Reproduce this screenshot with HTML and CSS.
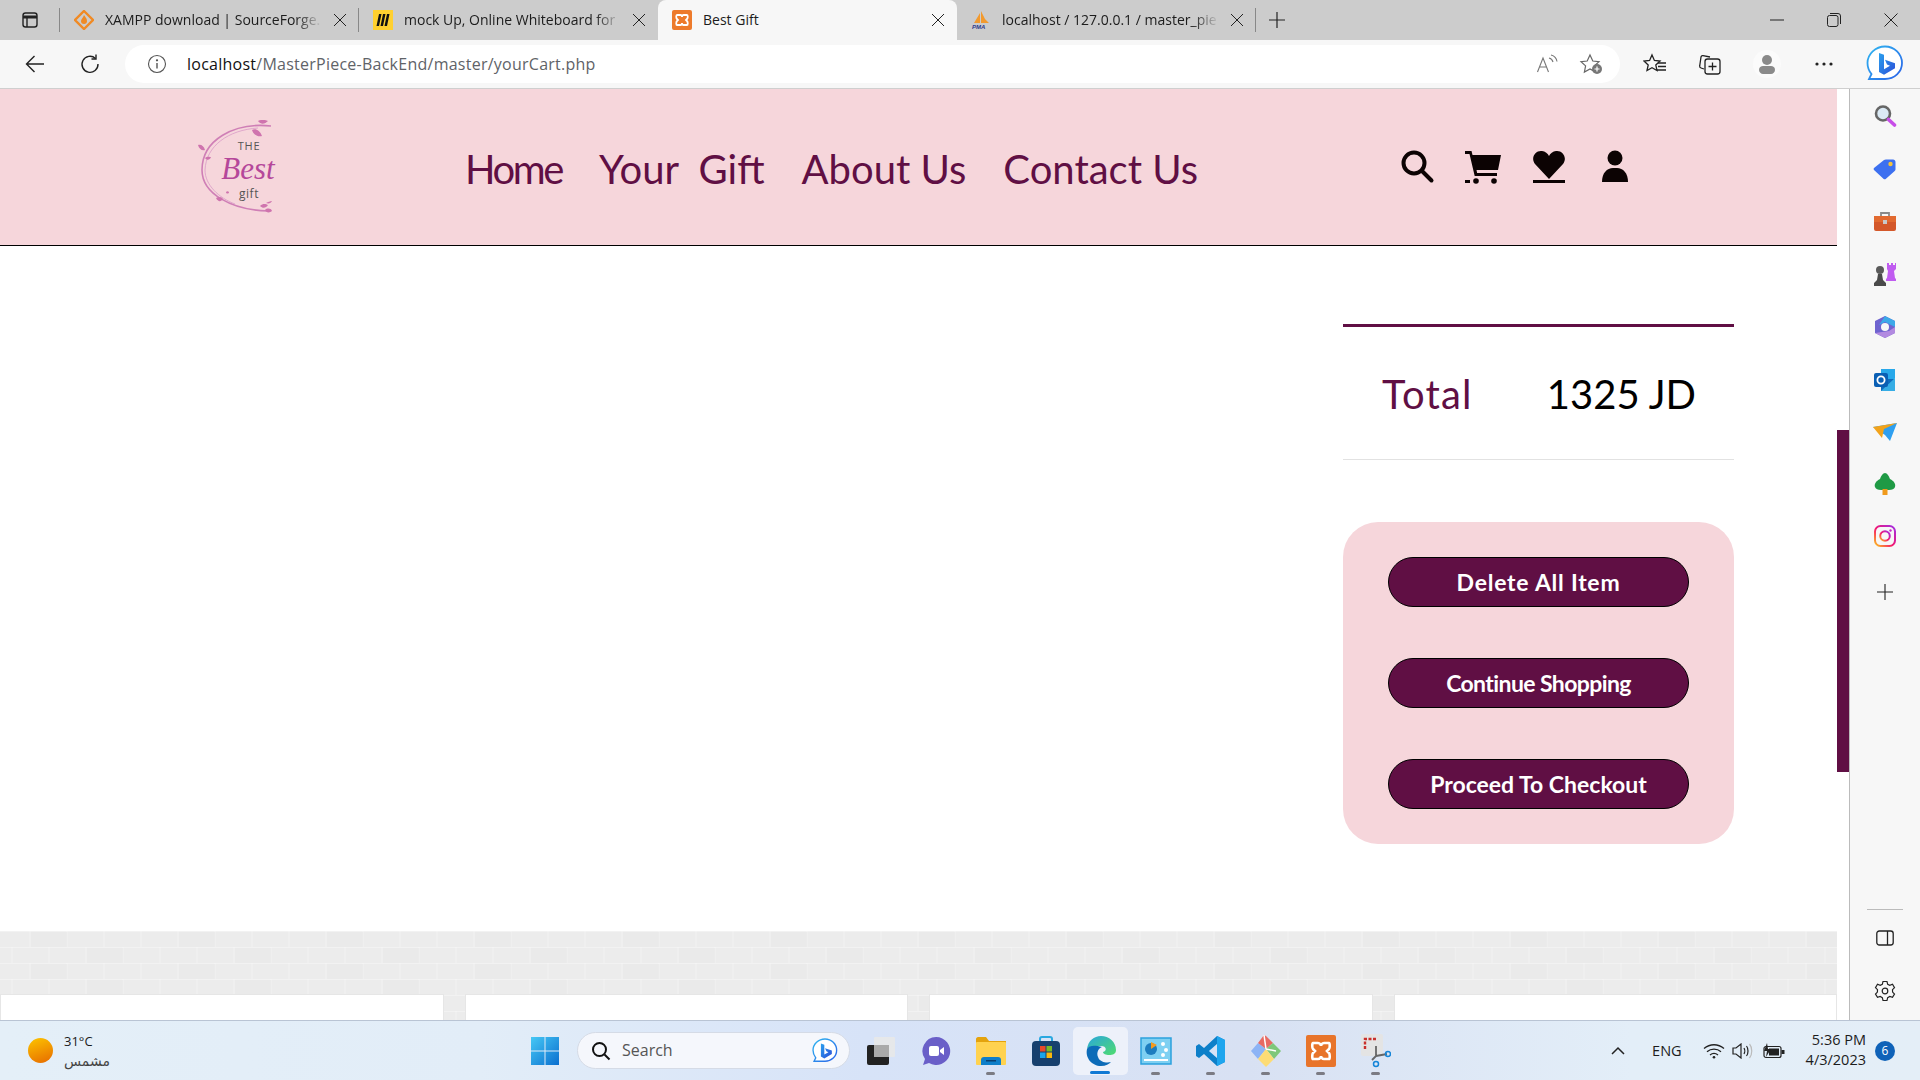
FILE: index.html
```html
<!DOCTYPE html>
<html>
  <head>
    <meta name="viewport" content="width=device-width,initial-scale=1.0">
    <title>Best Gift</title>
    <link rel="stylesheet" href="styles.css">
  </head>
  <body>
    <div class="tabbar">
      <div class="tab-manage">
        <svg width="18" height="18" viewBox="0 0 18 18" fill="none" stroke="#222" stroke-width="1.4"><rect x="2" y="2" width="14" height="14" rx="2.5"/><path d="M2 6h14" stroke-width="3"/><path d="M6 6v10"/></svg>
      </div>
      <div class="tab">
        <svg class="favicon" viewBox="0 0 20 20"><path d="M10 1l9 9-9 9-9-9z" fill="none" stroke="#f08a24" stroke-width="2.4"/><path d="M10 5c1 2 3 3 3 6a3 3 0 0 1-6 0c0-2 2-3 3-6z" fill="#f08a24"/></svg>
        <span class="tab-title">XAMPP download | SourceForge.</span>
        <span class="tab-close"></span>
      </div>
      <div class="tab">
        <svg class="favicon" viewBox="0 0 20 20"><rect width="20" height="20" fill="#ffd02f"/><path d="M6 4h2.500L6 16H3.500zM10 4h2.500L10 16H7.500zM14 4h2.500L14 16h-2.500z" fill="#111"/></svg>
        <span class="tab-title">mock Up, Online Whiteboard for</span>
        <span class="tab-close"></span>
      </div>
      <div class="tab tab-active">
        <svg class="favicon" viewBox="0 0 20 20"><rect width="20" height="20" rx="2" fill="#ed7a2b"/><path d="M5 5h3.500c1 0 1.500 1 1.500 2 0-1 .5-2 1.500-2H15c1 0 1 3 0 4l-1 1 1 1c1 1 1 4 0 4h-3.500c-1 0-1.500-1-1.500-2 0 1-.5 2-1.500 2H5c-1 0-1-3 0-4l1-1-1-1c-1-1-1-4 0-4z" fill="none" stroke="#fff" stroke-width="1.800"/></svg>
        <span class="tab-title">Best Gift</span>
        <span class="tab-close"></span>
      </div>
      <div class="tab">
        <svg class="favicon" viewBox="0 0 20 20"><path d="M3 13L9 3v10zM10 1l6 12h-6zM12 7l6 6h-3z" fill="#f29a2e"/><text x="1" y="19" class="pma-text">PMA</text></svg>
        <span class="tab-title">localhost / 127.0.0.1 / master_pie</span>
        <span class="tab-close"></span>
      </div>
      <div class="new-tab">
        <svg width="18" height="18" viewBox="0 0 18 18" stroke="#222" stroke-width="1.200"><path d="M9 1v16M1 9h16"/></svg>
      </div>
      <div class="window-btns">
        <svg width="14" height="14" viewBox="0 0 14 14" stroke="#222" fill="none"><path d="M0 7h14"/></svg>
        <svg width="14" height="14" viewBox="0 0 14 14" stroke="#222" fill="none"><rect x=".5" y="2.500" width="10.500" height="11" rx="2"/><path d="M3 .5h8a2.500 2.500 0 0 1 2.500 2.500v8"/></svg>
        <svg width="14" height="14" viewBox="0 0 14 14" stroke="#222" fill="none"><path d="M.5.5l13 13M13.500.5l-13 13"/></svg>
      </div>
    </div>

    <div class="toolbar">
      <svg class="nav-back" width="20" height="20" viewBox="0 0 20 20" fill="none" stroke="#222" stroke-width="1.400"><path d="M19 10H1.500M9.500 2l-8 8 8 8"/></svg>
      <svg class="nav-reload" width="20" height="20" viewBox="0 0 20 20" fill="none" stroke="#222" stroke-width="1.400"><path d="M15.500 4.500A8 8 0 1 0 18 10"/><path d="M16 .5v4.500h-4.500"/></svg>
      <div class="address">
        <svg width="20" height="20" viewBox="0 0 20 20" fill="none" stroke="#555" stroke-width="1.100"><circle cx="10" cy="10" r="8.500"/><path d="M10 9v5.500" stroke-width="1.400"/><circle cx="10" cy="6.300" r=".6" fill="#555"/></svg>
        <span class="url"><span class="url-host">localhost</span>/MasterPiece-BackEnd/master/yourCart.php</span>
        <svg class="read-aloud" width="22" height="20" viewBox="0 0 22 20" fill="none" stroke="#777" stroke-width="1.100"><path d="M1.500 18L7 4l5.500 14M3.500 13h7"/><path d="M13 4c2 .5 3.500 2 4 4M15 1c3 .8 5.500 3 6 6.500"/></svg>
        <svg class="star-add" width="24" height="22" viewBox="0 0 24 22" fill="none" stroke="#666" stroke-width="1.200"><path d="M11 2l2.800 6 6.200.7-4.600 4.200 1.200 6.100L11 16l-5.600 3 1.200-6.100L2 8.700 8.200 8z"/><circle cx="18" cy="16" r="5" fill="#777" stroke="none"/><path d="M18 13.500v5M15.500 16h5" stroke="#fff"/></svg>
      </div>
      <div class="toolbar-icons">
        <svg width="24" height="22" viewBox="0 0 24 22" fill="none" stroke="#222" stroke-width="1.300"><path d="M9 2l2.400 5.500 5.600.6-4.200 3.800 1.200 5.600L9 14.700l-5 2.800 1.200-5.600L1 8.100l5.600-.6z"/><path d="M15 10h8M15 13.500h8M14 17h9"/></svg>
        <svg width="24" height="22" viewBox="0 0 24 22" fill="none" stroke="#222" stroke-width="1.300"><path d="M6 16l-3-1c-1-.3-1.500-1-1.300-2L3 4c.2-1 1-1.600 2-1.400l7 1.400"/><rect x="7" y="6" width="15" height="15" rx="2.500"/><path d="M14.500 9.500v8M10.500 13.500h8"/></svg>
        <div class="profile-btn">
          <svg width="22" height="22" viewBox="0 0 22 22" fill="#8a8a8a"><circle cx="11" cy="7" r="5"/><path d="M3 17c0-3 2-4 4-4h8c2 0 4 1 4 4 0 2-2 4-4 4H7c-2 0-4-2-4-4z"/></svg>
        </div>
        <svg class="more-dots" width="20" height="6" viewBox="0 0 20 6" fill="#222"><circle cx="3" cy="3" r="1.600"/><circle cx="10" cy="3" r="1.600"/><circle cx="17" cy="3" r="1.600"/></svg>
      </div>
      <svg class="bing-btn" width="38" height="38" viewBox="0 0 38 38">
        <defs>
          <linearGradient id="bing-ring" x1="0" y1="0" x2="1" y2="1"><stop offset="0" stop-color="#2fb6f0"/><stop offset="1" stop-color="#2a62e8"/></linearGradient>
          <linearGradient id="bing-b" x1="0" y1="0" x2="1" y2="1"><stop offset="0" stop-color="#2aa0ee"/><stop offset="1" stop-color="#2c4fd8"/></linearGradient>
        </defs>
        <path d="M19 1.500c9.500 0 17 7.500 17 16.500s-7.500 16-17 16H3l2.500-5C3 26 1.500 22 1.500 18 1.500 9 9.500 1.500 19 1.500z" fill="#fff" stroke="url(#bing-ring)" stroke-width="1.800"/>
        <path d="M13 8l5 1.700v14.500l6-3.400-3-1.400-2-4.600 10 3.500v5l-11 6.500-5-2.800z" fill="url(#bing-b)"/>
      </svg>
    </div>

    <div class="workspace">
      <div class="page">
        <header class="site-header">
          <svg class="logo" width="80" height="94" viewBox="0 0 80 94">
            <path d="M73 6C36 2 4 20 4 50c0 24 30 40 66 41" fill="none" stroke="#cf7fb6" stroke-width="1.600"/>
            <path d="M60 8C30 10 8 26 7 50c0 15 14 28 30 34" fill="none" stroke="#d99ac6" stroke-width=".8"/>
            <path d="M60 1c4-2 8-1 10 0-3 3-7 4-10 0zM54 10c3-2 8 0 10 6-5 1-9-2-10-6zM0 25c3-1 6 1 7 5-3 1-6-1-7-5zM7 38c2-2 5-1 6-1-1 3-4 4-6 1zM18 78c3-2 6-1 7 1-2 3-5 3-7-1zM28 72c1-1 2-1 3 0 0 2-3 2-3 0zM62 86c3-3 6-2 8-1-2 3-5 4-8 1zM67 90c2-2 6-2 7 1-2 2-6 2-7-1zM68 83c2-1 4-2 6-2-1 2-3 3-6 2z" fill="#cf74ae"/>
            <text x="51" y="30" class="logo-the">THE</text>
            <text x="50" y="59" class="logo-best">Best</text>
            <text x="51" y="78" class="logo-gift">gift</text>
          </svg>
          <nav class="site-nav">
            <a class="nav-tight">Home</a>
            <a class="nav-wide">Your Gift</a>
            <a>About Us</a>
            <a>Contact Us</a>
          </nav>
          <div class="site-icons">
            <svg width="36" height="36" viewBox="0 0 36 36" fill="none" stroke="#0c0303" stroke-width="4"><circle cx="15" cy="14" r="10.500"/><path d="M22.500 21.500l10 10" stroke-linecap="round"/></svg>
            <svg width="36" height="36" viewBox="0 0 36 36" fill="#0c0303"><path d="M0 2h6.500l1 4H36l-3 15H11.500l.6 3H32v3H9.700L4.500 5H0z"/><circle cx="11" cy="32" r="2.800"/><circle cx="29" cy="32" r="2.800"/><rect x="0" y="31" width="5" height="3"/></svg>
            <svg width="36" height="36" viewBox="0 0 36 36" fill="#0c0303"><path d="M18 30L4 15C-1 8 5 1 11 2c3 .4 6 2.500 7 5 1-2.500 4-4.600 7-5 6-1 12 6 7 13z"/><rect x="2" y="31" width="32" height="3"/></svg>
            <svg width="36" height="36" viewBox="0 0 36 36" fill="#0c0303"><circle cx="18" cy="9" r="7.500"/><path d="M5 33c0-9 5-14 11-14h4c6 0 11 5 11 14z"/></svg>
          </div>
        </header>

        <main class="cart">
          <div class="summary">
            <div class="total-row">
              <span class="total-label">Total</span>
              <span class="total-value">1325 JD</span>
            </div>
            <div class="actions">
              <a class="action-btn btn-wide">Delete All Item</a>
              <a class="action-btn btn-tight">Continue Shopping</a>
              <a class="action-btn">Proceed To Checkout</a>
            </div>
          </div>
        </main>

        <section class="bricks">
          <div class="brick-card"></div>
          <div class="brick-card"></div>
          <div class="brick-card"></div>
          <div class="brick-card"></div>
        </section>
      </div>

      <div class="scrollbar"><div class="scroll-thumb"></div></div>

      <aside class="edge-bar">
        <div class="edge-group">
          <svg width="24" height="24" viewBox="0 0 24 24" fill="none"><circle cx="10" cy="9.500" r="7" stroke="#666" stroke-width="2.600" fill="#dbeaf5"/><path d="M15.500 15.500l6 5.500" stroke="#c74ee8" stroke-width="3.600" stroke-linecap="round"/></svg>
          <svg width="24" height="24" viewBox="0 0 24 24"><path d="M1 13c-.5-.7-.5-1.500 0-2L11 3c.5-.4 1-.6 2-.6h7c1.500 0 2.500 1 2.500 2.500v7c0 1-.2 1.500-.8 2l-9 8c-.6.5-1.500.5-2 0z" fill="#3d70f0"/><circle cx="17.500" cy="7" r="2.200" fill="#f5c43a"/></svg>
          <svg width="24" height="24" viewBox="0 0 24 24"><path d="M8 7V3h8v4" fill="none" stroke="#8a8a8a" stroke-width="1.800"/><rect x="1" y="6" width="22" height="15" rx="2" fill="#d4582a"/><rect x="1" y="6" width="22" height="6" fill="#e26a30"/><rect x="10" y="10" width="4" height="4" fill="#c9c9c9"/></svg>
          <svg width="24" height="24" viewBox="0 0 24 24"><path d="M14 1h2v2h2V1h2v2h2V1h1v6l-2 2 1 7 1 1v2H13v-2l1-1 1-7-1-2z" fill="#c05cf0"/><circle cx="7" cy="8" r="4" fill="#5a5a5a"/><path d="M5 12h4l1 6 3 3v3H1v-3l3-3z" fill="#4a4a4a"/></svg>
          <svg width="24" height="24" viewBox="0 0 24 24"><path d="M12 1l10 5v12l-10 5-10-5V6z" fill="#6e63cf"/><path d="M12 1l10 5v6l-6-3-4-2-6 3z" fill="#3da9e8"/><path d="M2 18l10 5 10-5v-6l-6 4z" fill="#b28ae0"/><circle cx="12" cy="12" r="4" fill="#f7f7f7"/></svg>
          <svg width="24" height="24" viewBox="0 0 24 24"><rect x="8" y="1" width="14" height="12" fill="#28a8ea"/><path d="M8 11l14 0v12H8z" fill="#0f6cbd"/><path d="M22 10v13H8z" fill="#50d9ff" opacity=".6"/><rect x="1" y="5" width="14" height="14" rx="2" fill="#0a5fb4"/><circle cx="8" cy="12" r="3.600" fill="none" stroke="#fff" stroke-width="1.800"/></svg>
          <svg width="24" height="22" viewBox="0 0 24 22"><path d="M0 6l24-4-7 18-5-6z" fill="#2e9ff0"/><path d="M0 6l24-4-13 6-2 9z" fill="#f2a31b"/></svg>
          <svg width="24" height="24" viewBox="0 0 24 24"><path d="M12 1c2 0 4 3 5 6 4 2 6 5 5 8-.5 2-3 3-6 3H8c-3 0-5.500-1-6-3-1-3 1-6 5-8 1-3 3-6 5-6z" fill="#1f9a45"/><rect x="9.500" y="17" width="5" height="6" fill="#f09a1c"/></svg>
          <svg width="24" height="24" viewBox="0 0 24 24" fill="none">
            <defs><linearGradient id="insta" x1="0" y1="1" x2="1" y2="0"><stop offset="0" stop-color="#fdc21c"/><stop offset=".45" stop-color="#f5166e"/><stop offset="1" stop-color="#a02ee8"/></linearGradient></defs>
            <rect x="2" y="2" width="20" height="20" rx="5.500" stroke="url(#insta)" stroke-width="2"/><circle cx="12" cy="12" r="4.800" stroke="url(#insta)" stroke-width="2"/><circle cx="17.500" cy="6.500" r="1.200" fill="#c72cc5"/>
          </svg>
          <svg class="edge-plus" width="16" height="16" viewBox="0 0 16 16" stroke="#222" stroke-width="1.100"><path d="M8 0v16M0 8h16"/></svg>
        </div>
        <div class="edge-group edge-bottom">
          <div class="edge-divider"></div>
          <svg width="18" height="16" viewBox="0 0 18 16" fill="none" stroke="#222" stroke-width="1.300"><rect x=".8" y="1" width="16.400" height="14" rx="2.500"/><path d="M11.500 1v14"/></svg>
          <svg width="22" height="22" viewBox="0 0 22 22" fill="none" stroke="#222" stroke-width="1.200"><path d="M9 1.500h4l.7 2.800 2.100 1 2.700-1 2 3.400-2 2 .1 2.400 1.900 1.900-2 3.400-2.700-.9-2.100 1.200-.7 2.800H9l-.7-2.800-2.100-1.200-2.700.9-2-3.400 1.900-1.900.1-2.400-2-2 2-3.400 2.700 1 2.100-1z"/><circle cx="11" cy="11" r="2.800"/></svg>
        </div>
      </aside>
    </div>

    <footer class="taskbar">
      <div class="weather">
        <div class="sun"></div>
        <div class="weather-text">
          <span>31°C</span>
          <span class="weather-sub">مشمس</span>
        </div>
      </div>
      <svg class="start" width="30" height="30" viewBox="0 0 30 30">
        <defs><linearGradient id="win" x1="0" y1="0" x2="1" y2="1"><stop offset="0" stop-color="#46c8f5"/><stop offset="1" stop-color="#0b6fcf"/></linearGradient></defs>
        <path d="M1 1h13.500v13.500H1zM15.500 1H29v13.500H15.500zM1 15.500h13.500V29H1zM15.500 15.500H29V29H15.500z" fill="url(#win)"/>
      </svg>
      <div class="search-box">
        <svg width="20" height="20" viewBox="0 0 20 20" fill="none" stroke="#111" stroke-width="2"><circle cx="8.500" cy="8.500" r="6.500"/><path d="M13.500 13.500l5 5"/></svg>
        <span class="search-label">Search</span>
        <svg class="search-bing" width="26" height="26" viewBox="0 0 38 38">
          <path d="M19 1.500c9.500 0 17 7.500 17 16.500s-7.500 16-17 16H3l2.500-5C3 26 1.500 22 1.500 18 1.500 9 9.500 1.500 19 1.500z" fill="#fff" stroke="url(#bing-ring)" stroke-width="2"/>
          <path d="M13 8l5 1.700v14.500l6-3.400-3-1.400-2-4.600 10 3.500v5l-11 6.500-5-2.800z" fill="url(#bing-b)"/>
        </svg>
      </div>
      <div class="task-apps">
        <div class="task-app">
          <svg width="30" height="30" viewBox="0 0 30 30"><rect x="1" y="9" width="22" height="20" rx="2" fill="#222"/><rect x="8" y="1" width="21" height="20" rx="1" fill="#e8e8e8" opacity=".9"/><rect x="8" y="9" width="15" height="12" fill="#aaa"/></svg>
        </div>
        <div class="task-app">
          <svg width="30" height="30" viewBox="0 0 30 30"><path d="M15 1a14 14 0 1 1-7 26l-6 2 2-6A14 14 0 0 1 15 1z" fill="#6a5fc8"/><rect x="8" y="10" width="10" height="10" rx="2" fill="#fff"/><path d="M19 14l4-3v8l-4-3z" fill="#fff"/></svg>
        </div>
        <div class="task-app is-open">
          <svg width="32" height="30" viewBox="0 0 32 30"><path d="M1 3c0-1 1-2 2-2h8l3 4h17v22H1z" fill="#e4a30d"/><rect x="1" y="6" width="30" height="23" rx="1" fill="#ffd24f"/><path d="M6 29v-5c0-2 1-3 3-3h14c2 0 3 1 3 3v5z" fill="#0e7ec9"/><rect x="11" y="24" width="10" height="1.500" fill="#083f70"/></svg>
        </div>
        <div class="task-app">
          <svg width="30" height="30" viewBox="0 0 30 30"><path d="M9 6V3c0-1 1-2 2-2h8c1 0 2 1 2 2v3" fill="none" stroke="#2aa8e0" stroke-width="2"/><rect x="1" y="5" width="28" height="25" rx="4" fill="#17406e"/><rect x="9" y="10" width="5.500" height="5.500" fill="#e8492a"/><rect x="15.500" y="10" width="5.500" height="5.500" fill="#7bb927"/><rect x="9" y="16.500" width="5.500" height="5.500" fill="#1ba4ea"/><rect x="15.500" y="16.500" width="5.500" height="5.500" fill="#fbb80d"/></svg>
        </div>
        <div class="task-app task-active">
          <svg width="32" height="32" viewBox="0 0 32 32">
            <defs><linearGradient id="edge-a" x1="0" y1="0" x2="1" y2="1"><stop offset="0" stop-color="#2aa6dd"/><stop offset="1" stop-color="#4fdc6e"/></linearGradient></defs>
            <path d="M2 14C3 6 9 1 16 1c8 0 15 6 15 14 0 4-3 5-7 5-3 0-6-1-6-3 4-1 4-6-2-6-6 0-12 0-14 3z" fill="url(#edge-a)"/>
            <path d="M2 14c-2 9 5 17 14 17 5 0 8-2 10-4-3 1-11 1-13-5-2-5 1-9 4-10-7-2-13-2-15 2z" fill="#0c6bb8"/>
          </svg>
        </div>
        <div class="task-app is-open">
          <svg width="32" height="28" viewBox="0 0 32 28"><rect x="1" y="1" width="30" height="26" fill="#7ed0f2" stroke="#2ba1dd" stroke-width="1.500"/><circle cx="11" cy="12" r="6" fill="#1c7dbf"/><path d="M11 12V5l6 3z" fill="#f39a1e"/><circle cx="23" cy="7" r="2" fill="#fff"/><circle cx="26" cy="13" r="2" fill="#fff"/><circle cx="23" cy="18" r="2" fill="#fff"/><rect x="4" y="22" width="24" height="2" fill="#fff"/></svg>
        </div>
        <div class="task-app is-open">
          <svg width="30" height="32" viewBox="0 0 30 32"><path d="M21 1l8 4v22l-8 4L8 19l-5 4-3-2v-10l3-2 5 4z" fill="#0d7fc9"/><path d="M21 1l8 4v22l-8 4zM21 9l-8 7 8 7z" fill="#1ea5ee"/><path d="M21 9v14l-8-7z" fill="#d6e2f6"/></svg>
        </div>
        <div class="task-app is-open">
          <svg width="32" height="32" viewBox="0 0 32 32"><path d="M16 14L8 8 1 16l7 8z" fill="#8db4f5"/><path d="M16 14L8 8l6-8 2 1 7 7z" fill="#e86a63"/><path d="M16 14l7-6 8 8-7 8z" fill="#7ec77a"/><path d="M16 14l-8 10 8 8 8-8z" fill="#fddc75"/><path d="M14 0l2 14M16 14l10 2" stroke="#fff" stroke-width="1.500"/></svg>
        </div>
        <div class="task-app is-open">
          <svg width="30" height="32" viewBox="0 0 30 32"><rect width="30" height="32" rx="2" fill="#e8742a"/><path d="M7 8h5c2 0 3 2 3 3 0-1 1-3 3-3h5c1 0 1 5 0 6l-2 2 2 2c1 1 1 6 0 6h-5c-2 0-3-2-3-3 0 1-1 3-3 3H7c-1 0-1-5 0-6l2-2-2-2c-1-1-1-6 0-6z" fill="none" stroke="#fff" stroke-width="2.600"/></svg>
        </div>
        <div class="task-app is-open">
          <svg width="30" height="34" viewBox="0 0 30 34" fill="none"><rect x="0" y="0" width="22" height="22" rx="2" fill="#e4e4e4"/><path d="M4 15V5h12" stroke="#c9302c" stroke-width="2.400" stroke-dasharray="3 1.500"/><path d="M15 12v10M15 22l-4 4M15 22l11-2" stroke="#666" stroke-width="1.800"/><circle cx="15" cy="30" r="2.500" stroke="#1585d8" stroke-width="1.500"/><circle cx="27" cy="20" r="2.500" stroke="#1585d8" stroke-width="1.500"/></svg>
        </div>
      </div>
      <div class="tray">
        <svg class="tray-caret" width="14" height="9" viewBox="0 0 14 9" fill="none" stroke="#222" stroke-width="1.500"><path d="M1 8l6-6 6 6"/></svg>
        <span class="tray-lang">ENG</span>
        <svg class="tray-wifi" width="22" height="16" viewBox="0 0 22 16" fill="none" stroke="#222" stroke-width="1.300"><path d="M1 5.500c6-5 14-5 20 0M4 8.800c4-3.500 10-3.500 14 0M7 12c2.500-2 5.500-2 8 0"/><circle cx="11" cy="14.300" r="1.300" fill="#222" stroke="none"/></svg>
        <svg class="tray-sound" width="22" height="16" viewBox="0 0 22 16" fill="none" stroke="#222" stroke-width="1.200"><path d="M1 5v6h3l5 4V1L4 5z"/><path d="M12 5c1 1.500 1 4.500 0 6M14.500 3c2 2.500 2 7.500 0 10"/><path d="M17.500 1c3 3.500 3 10.500 0 14" stroke="#bbb"/></svg>
        <svg class="tray-battery" width="22" height="16" viewBox="0 0 22 16" fill="#222"><rect x="1" y="3.500" width="17" height="11" rx="2" fill="none" stroke="#222" stroke-width="1.200"/><rect x="6" y="5.500" width="10" height="7"/><rect x="18.500" y="7" width="3" height="4"/><path d="M4 0L1 8h3l-1 6 5-8H5z"/></svg>
        <div class="tray-clock">
          <span>5:36 PM</span>
          <span>4/3/2023</span>
        </div>
        <span class="tray-badge">6</span>
      </div>
    </footer>
  </body>
</html>
```

FILE: styles.css
```css
body {
  margin: 0;
  width: 1920px;
  height: 1080px;
  overflow: hidden;
  display: flex;
  flex-direction: column;
  font-family: "Open Sans", "Noto Sans", sans-serif;
  color: #1c1c1c;
}

/* browser tabs */
.tabbar {
  height: 40px;
  background: #cccccc;
  display: flex;
  flex-shrink: 0;
}
.tab-manage {
  width: 60px;
  box-sizing: border-box;
  display: flex;
  align-items: center;
  justify-content: center;
  position: relative;
}
.tab-manage::after, .tab::after {
  content: "";
  position: absolute;
  right: 0;
  top: 8px;
  height: 24px;
  width: 1px;
  background: #888;
}
.tab {
  width: 299px;
  box-sizing: border-box;
  padding-left: 14px;
  display: flex;
  align-items: center;
  position: relative;
  font-size: 14px;
}
.tab-active {
  background: #f7f7f7;
  border-radius: 8px 8px 0 0;
}
.tab-active::after, .tab:nth-child(3)::after {
  display: none;
}
.favicon {
  width: 20px;
  height: 20px;
  margin-right: 11px;
  flex-shrink: 0;
}
.pma-text {
  font: italic bold 6px "Liberation Sans", sans-serif;
  fill: #2d3a8c;
}
.tab-title {
  width: 217px;
  padding-bottom: 2px;
  white-space: nowrap;
  overflow: hidden;
  -webkit-mask-image: linear-gradient(to right, #000 88%, transparent);
  mask-image: linear-gradient(to right, #000 88%, transparent);
}
.tab-active .tab-title {
  -webkit-mask-image: none;
  mask-image: none;
}
.tab-close {
  width: 12px;
  height: 12px;
  margin-left: 12px;
  background:
    linear-gradient(45deg, transparent 46%, #222 46%, #222 54%, transparent 54%),
    linear-gradient(-45deg, transparent 46%, #222 46%, #222 54%, transparent 54%);
}
.new-tab {
  width: 42px;
  display: flex;
  align-items: center;
  justify-content: center;
}
.window-btns {
  margin-left: auto;
  display: flex;
  align-items: center;
  gap: 43px;
  padding-right: 22px;
}

/* browser toolbar */
.toolbar {
  height: 49px;
  background: #f7f7f7;
  box-sizing: border-box;
  border-bottom: 1px solid #cfcfcf;
  display: flex;
  align-items: center;
  flex-shrink: 0;
}
.nav-back {
  margin-left: 25px;
}
.nav-reload {
  margin-left: 35px;
}
.address {
  width: 1495px;
  height: 38px;
  margin-left: 25px;
  box-sizing: border-box;
  padding: 0 17px 0 22px;
  background: #fff;
  border-radius: 19px;
  display: flex;
  align-items: center;
}
.url {
  margin-left: 20px;
  font-size: 16px;
  letter-spacing: .25px;
  color: #5f6368;
}
.url-host {
  color: #111;
}
.read-aloud {
  margin-left: auto;
}
.star-add {
  margin-left: 21px;
}
.toolbar-icons {
  display: flex;
  align-items: center;
  gap: 31px;
  margin-left: 23px;
}
.profile-btn {
  width: 28px;
  height: 28px;
  border-radius: 50%;
  background: #fbfbfb;
  display: flex;
  align-items: center;
  justify-content: center;
}
.more-dots {
  margin-left: 2px;
}
.bing-btn {
  margin-left: 32px;
}

/* browser content */
.workspace {
  height: 931px;
  display: flex;
  flex-shrink: 0;
}
.page {
  width: 1837px;
  background: #fff;
  display: flex;
  flex-direction: column;
  overflow: hidden;
}
.site-header {
  height: 156px;
  flex-shrink: 0;
  background: #f6d6db;
  border-bottom: 1px solid #000;
  display: flex;
  align-items: center;
}
.logo {
  margin-left: 198px;
}
.logo-the {
  font: 11px "Open Sans", sans-serif;
  letter-spacing: .8px;
  fill: #555;
  text-anchor: middle;
}
.logo-gift {
  font: 12px "Open Sans", sans-serif;
  letter-spacing: .5px;
  fill: #555;
  text-anchor: middle;
}
.logo-best {
  font: italic 31px "Liberation Serif", serif;
  fill: #b5479a;
  text-anchor: middle;
}
.site-nav {
  margin-left: 187px;
  padding-top: 3px;
  display: flex;
  gap: 37px;
  font-family: Lato, sans-serif;
  font-size: 40px;
  color: #600f44;
}
.nav-tight {
  letter-spacing: -2.400px;
}
.nav-wide {
  word-spacing: 10px;
}
.site-icons {
  position: absolute;
  left: 1399px;
  top: 149px;
  display: flex;
  gap: 30px;
}
.cart {
  height: 685px;
  flex-shrink: 0;
  display: flex;
  justify-content: flex-end;
}
.summary {
  width: 391px;
  margin: 78px 103px 0 0;
}
.total-row {
  height: 136px;
  box-sizing: border-box;
  border-top: 3px solid #600f44;
  border-bottom: 1px solid #e2e2e2;
  display: flex;
  align-items: center;
  justify-content: space-between;
  padding: 2px 38px 0 39px;
  font-family: Lato, sans-serif;
  font-size: 40px;
}
.total-label {
  color: #600f44;
  letter-spacing: 1.200px;
}
.total-value {
  color: #000;
}
.actions {
  margin-top: 62px;
  height: 322px;
  box-sizing: border-box;
  padding: 35px 45px;
  background: #f6d6db;
  border-radius: 35px;
  display: flex;
  flex-direction: column;
  gap: 51px;
}
.action-btn {
  height: 51px;
  box-sizing: border-box;
  padding-bottom: 1px;
  border: 1px solid #000;
  border-radius: 26px;
  background: #600f44;
  color: #fff;
  display: flex;
  align-items: center;
  justify-content: center;
  font-family: Lato, sans-serif;
  font-weight: 700;
  font-size: 23px;
}
.btn-wide {
  letter-spacing: .75px;
}
.btn-tight {
  letter-spacing: -.6px;
}
.bricks {
  flex: 1;
  display: flex;
  gap: 21px;
  padding-top: 63px;
  background-color: #ececec;
  background-image: url("data:image/svg+xml,%3Csvg xmlns='http://www.w3.org/2000/svg' width='148' height='32'%3E%3Cg stroke='%23fff' stroke-opacity='.3' fill='none'%3E%3Cpath d='M0 .5h148M0 16.500h148M30 0v16M67 0v16M104 0v16M141 0v16M12 16v16M49 16v16M86 16v16M123 16v16'/%3E%3C/g%3E%3Crect x='31' y='1' width='36' height='15' fill='%23e8e8e8' fill-opacity='.5'/%3E%3Crect x='87' y='17' width='36' height='15' fill='%23e8e8e8' fill-opacity='.5'/%3E%3C/svg%3E");
}
.brick-card {
  flex: 1;
  background: #fff;
  border: 1px solid #e6e6e6;
  border-bottom: 0;
}

.scrollbar {
  width: 12px;
  background: #fff;
}
.scroll-thumb {
  margin-top: 341px;
  height: 342px;
  background: #600f44;
}

/* edge sidebar */
.edge-bar {
  width: 71px;
  box-sizing: border-box;
  border-left: 1px solid #bbb;
  background: #f7f7f7;
  display: flex;
  flex-direction: column;
  justify-content: space-between;
  align-items: center;
  padding: 15px 0 18px;
}
.edge-group {
  display: flex;
  flex-direction: column;
  align-items: center;
  gap: 28.800px;
}
.edge-plus {
  margin-top: 7px;
}
.edge-bottom {
  gap: 20px;
}
.edge-divider {
  width: 36px;
  height: 1px;
  background: #bbb;
}
.edge-bottom svg + svg {
  margin-top: 14px;
}

/* windows taskbar */
.taskbar {
  height: 60px;
  flex-shrink: 0;
  box-sizing: border-box;
  border-top: 1px solid #b9c4d4;
  background: linear-gradient(to right, #e4eff8 0%, #e2edf8 25%, #d7e3f8 45%, #d8e1f3 65%, #e3eef8 85%, #e4eef7 100%);
  display: flex;
  align-items: center;
  position: relative;
}
.weather {
  display: flex;
  align-items: center;
  margin-left: 28px;
  width: 502px;
}
.sun {
  width: 25px;
  height: 25px;
  border-radius: 50%;
  background: linear-gradient(160deg, #fdc500, #e66a00);
}
.weather-text {
  margin-left: 11px;
  display: flex;
  flex-direction: column;
  font-size: 13px;
  line-height: 20px;
}
.weather-sub {
  font-family: "DejaVu Sans", sans-serif;
  font-size: 14px;
  color: #444;
}
.search-box {
  width: 273px;
  height: 37px;
  margin-left: 17px;
  box-sizing: border-box;
  border: 1px solid #d5dbe6;
  border-radius: 19px;
  background: #f5f7fc;
  display: flex;
  align-items: center;
  padding: 0 11px 0 13px;
}
.search-label {
  margin-left: 11px;
  padding-bottom: 2px;
  font-size: 16px;
  color: #555;
}
.search-bing {
  margin-left: auto;
}
.task-apps {
  display: flex;
  margin-left: 3px;
}
.task-app {
  width: 55px;
  height: 48px;
  display: flex;
  align-items: center;
  justify-content: center;
  position: relative;
}
.is-open::after {
  content: "";
  position: absolute;
  left: 23px;
  bottom: 0;
  width: 9px;
  height: 3px;
  border-radius: 2px;
  background: #7b7b83;
}
.task-active {
  background: #edf1fa;
  border-radius: 5px;
}
.task-active::after {
  content: "";
  position: absolute;
  left: 17px;
  bottom: 1px;
  width: 20px;
  height: 3px;
  border-radius: 2px;
  background: #0f78d4;
}
.tray {
  margin-left: auto;
  display: flex;
  align-items: center;
  padding-right: 25px;
}
.tray-lang {
  margin-left: 27px;
  font-size: 14.500px;
}
.tray-wifi {
  margin-left: 21px;
}
.tray-sound {
  margin-left: 7px;
}
.tray-battery {
  margin-left: 9px;
}
.tray-clock {
  margin-left: 21px;
  padding-bottom: 2px;
  display: flex;
  flex-direction: column;
  align-items: flex-end;
  font-size: 14.500px;
  line-height: 20px;
}
.tray-badge {
  width: 20px;
  height: 20px;
  margin-left: 9px;
  border-radius: 50%;
  background: #0f62b8;
  color: #fff;
  font-size: 12px;
  display: flex;
  align-items: center;
  justify-content: center;
}
```
